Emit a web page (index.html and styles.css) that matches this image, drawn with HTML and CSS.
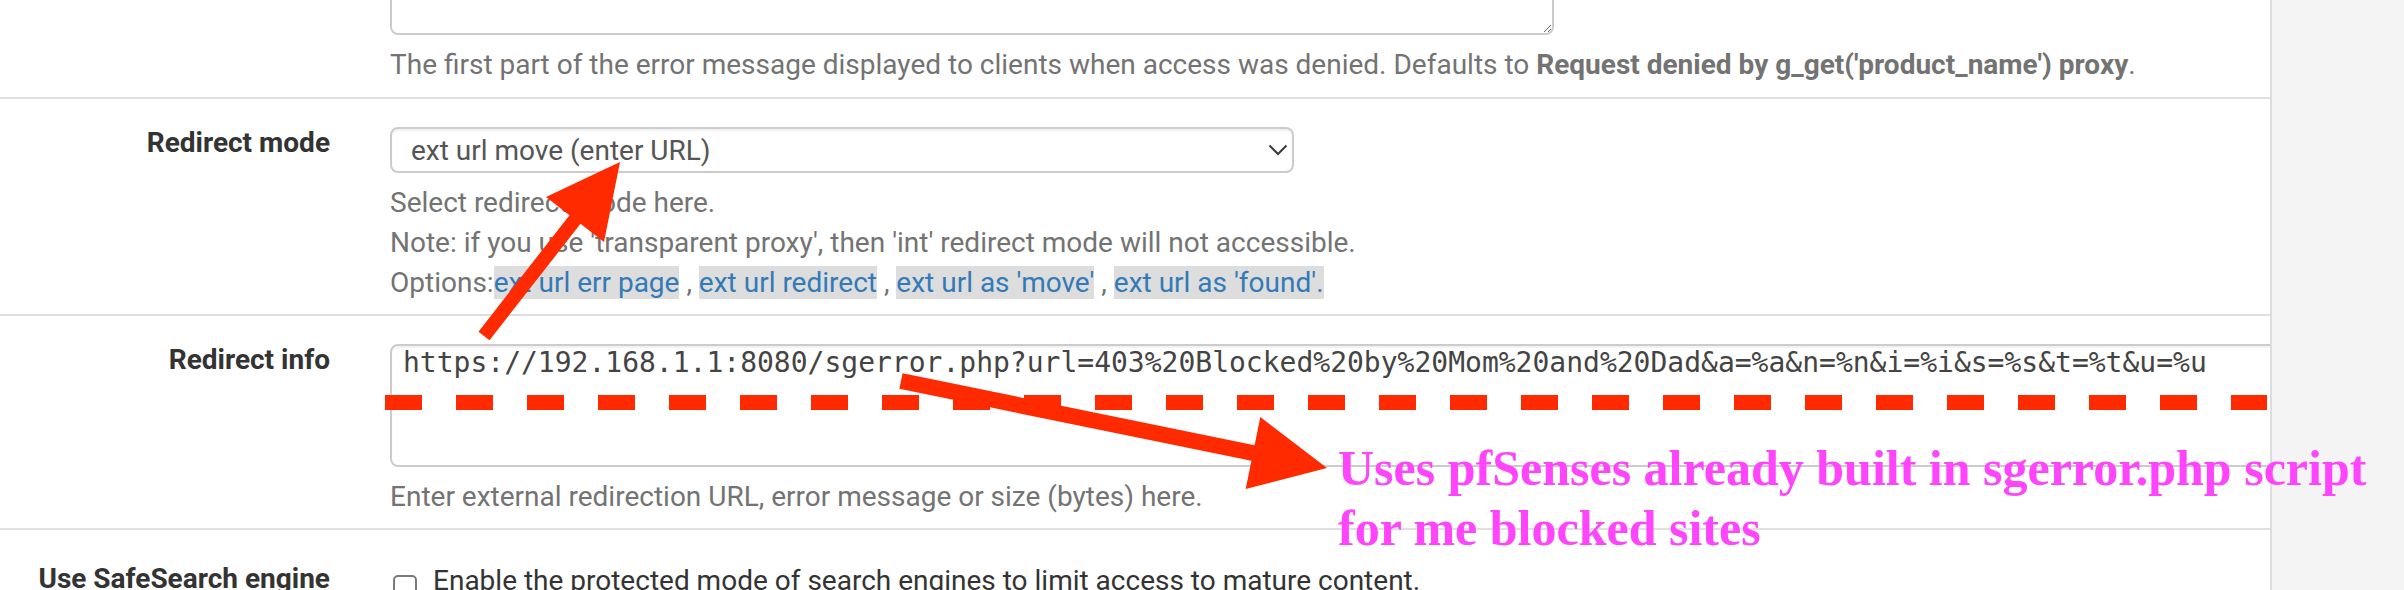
FILE: index.html
```html
<!DOCTYPE html>
<html lang="en">
<head>
<meta charset="utf-8">
<title>Redirect settings</title>
<link rel="stylesheet" href="styles.css">
</head>
<body>
<div class="page">
  <div class="panel">
    <div class="row row-first">
      <div class="label"></div>
      <div class="content content-first">
        <textarea class="ta-top" aria-label="Denied message"></textarea>
        <div class="help">The first part of the error message displayed to clients when access was denied. Defaults to <b>Request denied by g_get('product_name') proxy</b>.</div>
      </div>
    </div>
    <div class="row">
      <div class="label">Redirect mode</div>
      <div class="content">
        <div class="select-wrap">
          <select class="select" aria-label="Redirect mode">
            <option>ext url move (enter URL)</option>
          </select>
          <svg class="chev" width="20" height="12" viewBox="0 0 20 12"><path d="M1.5 1.5 L10 10 L18.5 1.5" fill="none" stroke="#3a3a3a" stroke-width="2"/></svg>
        </div>
        <div class="help">Select redirect mode here.<br>Note: if you use 'transparent proxy', then 'int' redirect mode will not accessible.<br>Options:<a class="opt">ext url err page</a> , <a class="opt">ext url redirect</a> , <a class="opt">ext url as 'move'</a> , <a class="opt">ext url as 'found'.</a></div>
      </div>
    </div>
    <div class="row">
      <div class="label">Redirect info</div>
      <div class="content">
        <textarea class="ta-info" wrap="off" aria-label="Redirect info">https://192.168.1.1:8080/sgerror.php?url=403%20Blocked%20by%20Mom%20and%20Dad&amp;a=%a&amp;n=%n&amp;i=%i&amp;s=%s&amp;t=%t&amp;u=%u</textarea>
        <div class="help">Enter external redirection URL, error message or size (bytes) here.</div>
      </div>
    </div>
    <div class="row row-last">
      <div class="label label-check">Use SafeSearch engine</div>
      <div class="content content-check">
        <label class="check"><input type="checkbox" class="cb"> Enable the protected mode of search engines to limit access to mature content.</label>
      </div>
    </div>
  </div>
  <div class="sidebar"></div>

  <svg class="annot" width="2404" height="590" viewBox="0 0 2404 590">
    <line x1="385" y1="402.5" x2="2267" y2="402.5" stroke="#ff2a00" stroke-width="15" stroke-dasharray="37 34"/>
    <polygon fill="#ff2a00" points="478.5,331.7 569.5,215.2 546,197 620,162 604,242 580.5,223.8 489.5,340.3"/>
    <polygon fill="#ff2a00" points="902.6,373.2 1254.6,445.2 1260.3,417 1327,468 1245.7,489 1251.4,460.8 899.4,388.8"/>
  </svg>
  <div class="note">Uses pfSenses already built in sgerror.php script<br>for me blocked sites</div>
</div>
</body>
</html>
```
FILE: styles.css
```css
html, body {
  margin: 0;
  padding: 0;
  background: #ffffff;
  overflow: hidden;
}

.page {
  position: relative;
  display: flex;
  width: 2404px;
  height: 590px;
  overflow: hidden;
  font-family: Roboto, "Liberation Sans", sans-serif;
  font-size: 28px;
  line-height: 40px;
  color: #333333;
}

.panel {
  width: 2270px;
  flex: none;
  border-right: 2px solid #dddddd;
  overflow: hidden;
  background: #ffffff;
}

.sidebar {
  flex: 1;
  background: #f4f4f4;
}

.row {
  display: flex;
  border-bottom: 2px solid #dfdfdf;
  padding-bottom: 11px;
}

.row-first {
  margin-top: -70px;
  padding-bottom: 12px;
}

.row-last {
  border-bottom: none;
}

.label {
  width: 330px;
  flex: none;
  padding: 24px 0 0 0;
  margin-right: 60px;
  text-align: right;
  font-weight: 700;
  color: #333333;
  box-sizing: border-box;
}

.label-check {
  padding-top: 29px;
}

.content {
  flex: 1;
  min-width: 0;
  padding-top: 28px;
}

.content-first {
  padding-top: 0;
}

.content-check {
  padding-top: 31px;
}

.help {
  margin-top: 10px;
  color: #737373;
}

.help b {
  font-weight: 700;
}

.opt {
  color: #337ab7;
  background: #dddddd;
  text-decoration: none;
}

.ta-top {
  display: block;
  width: 1164px;
  height: 105px;
  box-sizing: border-box;
  border: 2px solid #cccccc;
  border-radius: 8px;
  resize: both;
  background: #ffffff;
  margin: 0;
}

.select-wrap {
  position: relative;
  width: 904px;
  height: 46px;
}

.select {
  appearance: none;
  -webkit-appearance: none;
  display: block;
  width: 904px;
  height: 46px;
  box-sizing: border-box;
  margin: 0;
  border: 2px solid #cccccc;
  border-radius: 8px;
  background: #ffffff;
  box-shadow: inset 0 2px 2px rgba(0, 0, 0, 0.06);
  padding: 0 0 0 19px;
  font-family: Roboto, "Liberation Sans", sans-serif;
  font-size: 28px;
  color: #555555;
}

.chev {
  position: absolute;
  right: 6px;
  top: 17px;
}

.ta-info {
  display: block;
  width: 1960px;
  height: 123px;
  box-sizing: border-box;
  margin: 0;
  border: 2px solid #cccccc;
  border-radius: 8px;
  box-shadow: inset 0 2px 2px rgba(0, 0, 0, 0.06);
  padding: 1px 11px;
  font-family: "DejaVu Sans Mono", "Liberation Mono", monospace;
  font-size: 28px;
  line-height: 32px;
  color: #444444;
  resize: none;
  overflow: hidden;
  white-space: pre;
  background: #ffffff;
}

.check {
  display: flex;
  align-items: baseline;
  color: #333333;
}

.cb {
  appearance: none;
  -webkit-appearance: none;
  width: 24px;
  height: 24px;
  box-sizing: border-box;
  border: 2px solid #7a7a7a;
  border-radius: 5px;
  margin: 0 16px 0 3px;
  background: #ffffff;
  flex: none;
  align-self: flex-end;
  position: relative;
  top: -2px;
}

.annot {
  position: absolute;
  left: 0;
  top: 0;
  pointer-events: none;
}

.note {
  position: absolute;
  left: 1338px;
  top: 438px;
  font-family: "Liberation Serif", "Times New Roman", serif;
  font-weight: 700;
  font-size: 50px;
  line-height: 60px;
  color: #ff45fb;
  white-space: nowrap;
}
```
